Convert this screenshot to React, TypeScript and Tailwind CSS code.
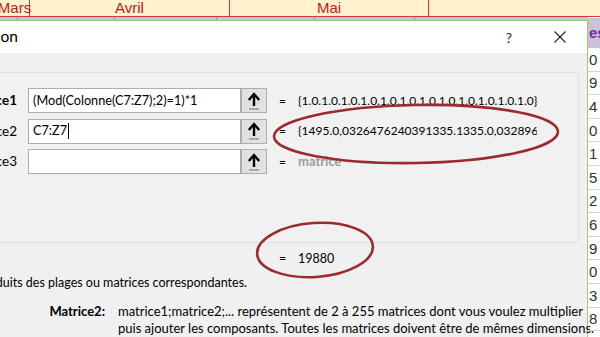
import React from "react";

const font = { fontFamily: 'Lato, "Noto Sans", sans-serif' };

function RefButton() {
  return (
    <div className="w-[26px] h-[25px] shrink-0 bg-[#e1e1e1] border border-[#adadad] flex items-center justify-center">
      <svg width="18" height="20" viewBox="0 0 18 20">
        <path d="M9 4 L9 15" stroke="#000" strokeWidth="2.4" fill="none" />
        <path d="M3.8 9 L9 3 L14.2 9" stroke="#000" strokeWidth="2.4" fill="none" strokeLinejoin="miter" />
        <path d="M4 18 L14 18" stroke="#8a8a8a" strokeWidth="1.3" />
      </svg>
    </div>
  );
}

function ArgRow({
  label,
  bold,
  value,
  result,
  resultGray,
  caret,
}: {
  label: string;
  bold?: boolean;
  value: string;
  result: string;
  resultGray?: boolean;
  caret?: boolean;
}) {
  return (
    <div className="flex items-center h-[25px]">
      <div className="w-[17px] shrink-0 flex justify-end">
        <span className={`whitespace-nowrap shrink-0 text-[13.5px] text-black ${bold ? "font-bold" : ""}`}>{label}</span>
      </div>
      <div className="w-[11px] shrink-0" />
      <div className="w-[213px] h-[25px] shrink-0 bg-white border border-[#adadad] flex items-center pl-[4px] text-[12.7px] text-black whitespace-nowrap overflow-hidden">
        {value}
        {caret && <span className="inline-block w-px h-[16px] bg-black ml-px" />}
      </div>
      <RefButton />
      <div className="w-[31px] shrink-0 flex justify-center text-[12px] text-black">=</div>
      <div
        className={`w-[239px] shrink-0 overflow-hidden whitespace-nowrap ${
          resultGray ? "text-[13px] text-[#9c9c9c] font-bold" : "text-[12px] text-black"
        }`}
      >
        {result}
      </div>
    </div>
  );
}

export default function App() {
  const digits = ["0", "9", "4", "0", "1", "5", "2", "6", "9", "0", "3", "8"];
  return (
    <div className="relative w-[600px] h-[337px] overflow-hidden bg-white" style={font}>
      {/* Excel header row */}
      <div className="flex h-[17px] bg-[#fff2cc] border-b border-[#d9383a]">
        <div className="w-[115px] shrink-0 flex justify-center border-r border-[#d9383a] ml-[-85px] pl-[85px]">
          <span className="text-[15px] leading-[15px] text-[#c0181c]" style={{ fontFamily: '"Liberation Sans", sans-serif' }}>Mars</span>
        </div>
        <div className="w-[200px] shrink-0 flex justify-center border-r border-[#d9383a]">
          <span className="text-[15px] leading-[15px] text-[#c0181c]" style={{ fontFamily: '"Liberation Sans", sans-serif' }}>Avril</span>
        </div>
        <div className="w-[199px] shrink-0 flex justify-center border-r border-[#d9383a]">
          <span className="text-[15px] leading-[15px] text-[#c0181c]" style={{ fontFamily: '"Liberation Sans", sans-serif' }}>Mai</span>
        </div>
        <div className="flex-1" />
      </div>

      <div className="flex">
        {/* Left: band + dialog */}
        <div className="w-[588px] shrink-0 flex flex-col">
          <div className="h-[3px] bg-[#b9c8dc] flex">
            <div className="w-[18px] border-r border-[#8d9bb0]" />
            <div className="w-[97px] border-r border-[#8d9bb0]" />
            <div className="w-[102px] border-r border-[#8d9bb0]" />
            <div className="w-[98px] border-r border-[#8d9bb0]" />
            <div className="w-[100px] border-r border-[#8d9bb0]" />
          </div>
          {/* Dialog */}
          <div className="h-[317px] bg-[#f0f0f0] border-t border-r border-[#9dcb78] flex flex-col">
            {/* Title bar */}
            <div className="h-[32px] bg-white flex items-center">
              <div className="w-[18px] shrink-0 flex justify-end">
                <span className="whitespace-nowrap shrink-0 text-[15.5px] text-black">Arguments de la fonction</span>
              </div>
              <div className="flex-1" />
              <span className="text-[14px] text-[#222] mr-[42px]">?</span>
              <svg width="12" height="12" viewBox="0 0 12 12" className="mr-[21px]">
                <path d="M0.5 0.5 L11.5 11.5 M11.5 0.5 L0.5 11.5" stroke="#222" strokeWidth="1.1" />
              </svg>
            </div>

            {/* Panel */}
            <div className="mt-[19px] mr-[8px] h-[171px] border-t border-b border-r border-[#e0e0e0] bg-[#f1f1f1] pt-[15px] flex flex-col gap-[5.5px]">
              <ArgRow label="Matrice1" bold value="(Mod(Colonne(C7:Z7);2)=1)*1" result="{1.0.1.0.1.0.1.0.1.0.1.0.1.0.1.0.1.0.1.0.1.0.1.0}" />
              <ArgRow label="Matrice2" value="C7:Z7" caret result="{1495.0,0326476240391335.1335.0,0328966}" />
              <ArgRow label="Matrice3" value="" result="matrice" resultGray />
            </div>

            {/* Result */}
            <div className="flex items-center h-[16px] mt-[8px] text-[12.5px] text-black">
              <div className="w-[267px] shrink-0" />
              <div className="w-[31px] shrink-0 flex justify-center">=</div>
              <div>19880</div>
            </div>

            {/* Description */}
            <div className="mt-[7px] w-[247px] flex justify-end h-[18px] items-center">
              <span className="whitespace-nowrap shrink-0 text-[12.5px] text-black">
                Multiplie les éléments des matrices puis renvoie la somme des produits des plages ou matrices correspondantes.
              </span>
            </div>

            <div className="mt-[11px] flex text-[13px] text-black leading-[16.5px]">
              <div className="w-[105px] shrink-0 text-right font-bold">Matrice2:</div>
              <div className="pl-[13px] whitespace-nowrap">
                matrice1;matrice2;... représentent de 2 à 255 matrices dont vous voulez multiplier
                <br />
                puis ajouter les composants. Toutes les matrices doivent être de mêmes dimensions.
              </div>
            </div>
          </div>
        </div>

        {/* Right: spreadsheet column */}
        <div className="flex-1 flex flex-col" style={{ fontFamily: '"Liberation Sans", sans-serif' }}>
          <div className="h-[30px] mt-px bg-[#ccc0da] border-b border-[#c9c9c9] flex items-center pl-[1px] text-[15px] leading-none font-bold text-[#7030a0] overflow-hidden whitespace-nowrap">
            es
          </div>
          {digits.map((d, i) => (
            <div key={i} className="h-[23.6px] border-b border-[#d4d4d4] flex items-center pl-[1px] text-[15px] leading-none text-[#333]">
              {d}
            </div>
          ))}
        </div>
      </div>

      {/* Hand-drawn red ellipses */}
      <svg className="absolute inset-0 pointer-events-none" width="600" height="337" viewBox="0 0 600 337">
        <ellipse cx="416" cy="134" rx="142" ry="29" fill="none" stroke="#9c2a2f" strokeWidth="2.6" transform="rotate(-1 416 134)" />
        <ellipse cx="315" cy="250" rx="58" ry="27" fill="none" stroke="#9c2a2f" strokeWidth="2.6" transform="rotate(-4 315 250)" />
      </svg>
    </div>
  );
}
